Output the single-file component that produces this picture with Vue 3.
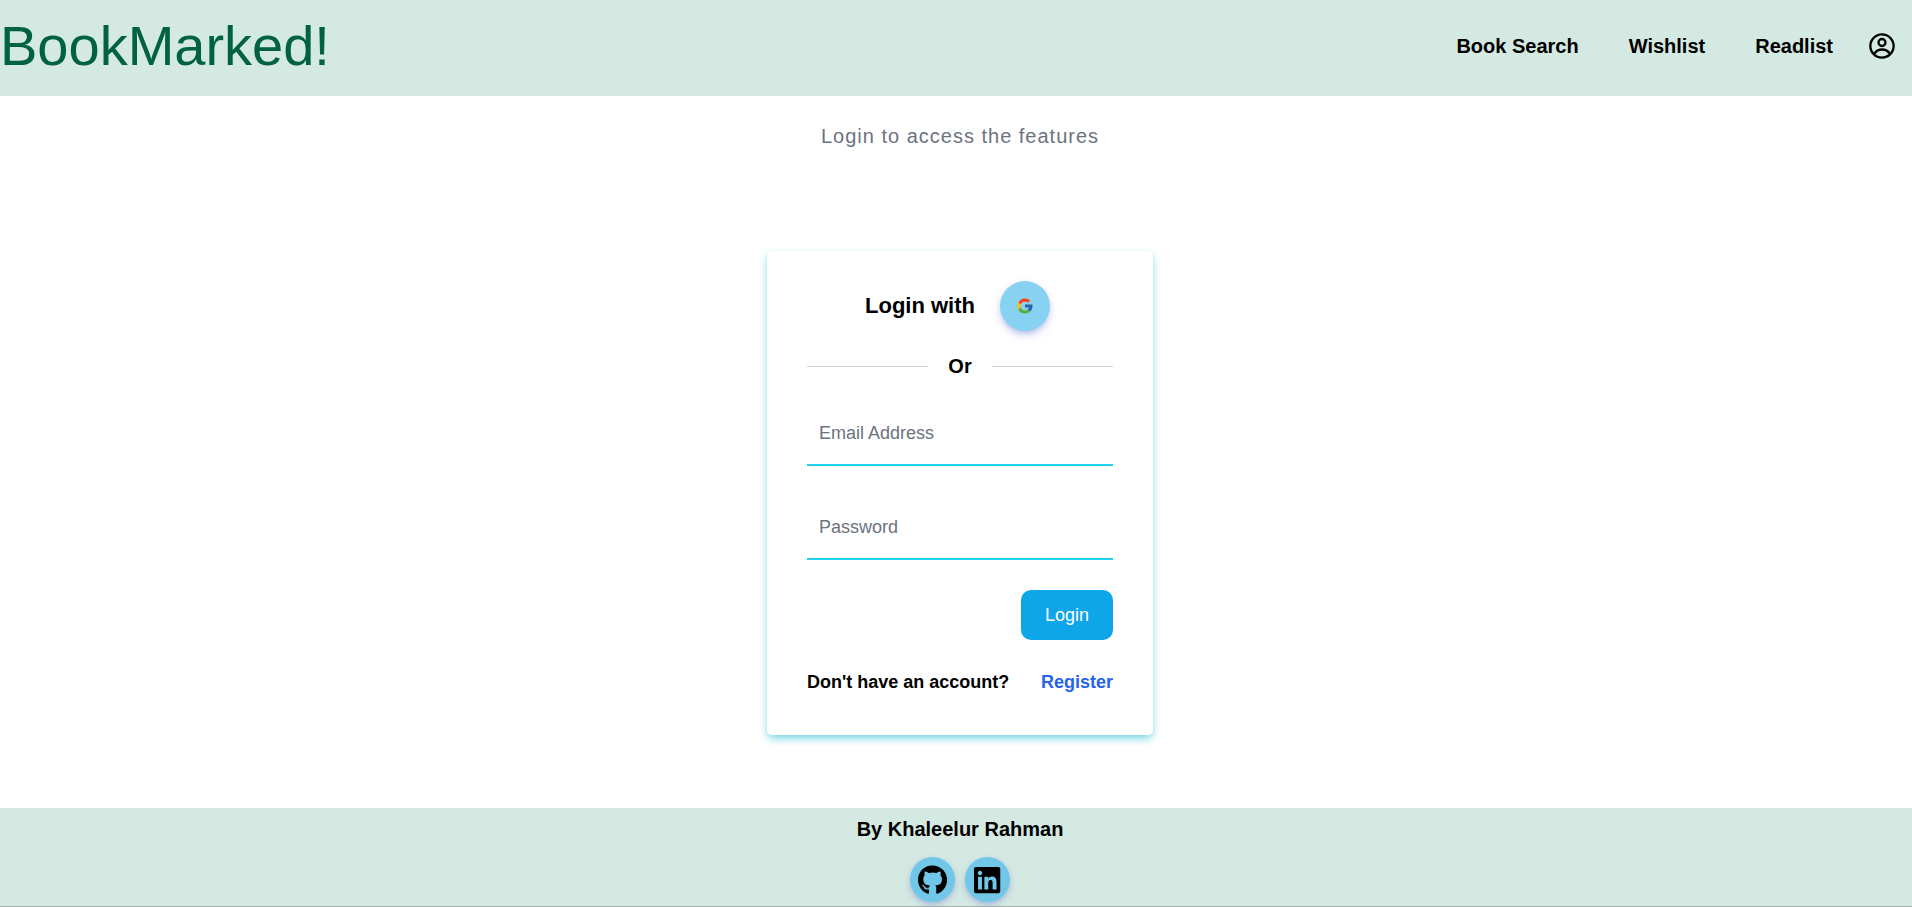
<script setup>
import { ref } from 'vue'

const navLinks = ['Book Search', 'Wishlist', 'Readlist']
const email = ref('')
const password = ref('')
</script>

<template>
  <div class="page">
    <header class="header">
      <h1 class="brand">BookMarked!</h1>
      <nav class="nav">
        <a v-for="link in navLinks" :key="link" href="#" class="nav-link">{{ link }}</a>
        <a href="#" class="profile" aria-label="Profile">
          <svg viewBox="0 0 24 24" width="28" height="28" fill="currentColor" aria-hidden="true">
            <path fill-rule="evenodd" clip-rule="evenodd" d="M16 9a4 4 0 1 1-8 0 4 4 0 0 1 8 0Zm-2 0a2 2 0 1 1-4 0 2 2 0 0 1 4 0Z" />
            <path fill-rule="evenodd" clip-rule="evenodd" d="M12 1C5.925 1 1 5.925 1 12s4.925 11 11 11 11-4.925 11-11S18.075 1 12 1ZM3 12c0 2.09.713 4.014 1.908 5.542A8.986 8.986 0 0 1 12.065 14a8.984 8.984 0 0 1 7.092 3.458A9 9 0 1 0 3 12Zm9 9a8.963 8.963 0 0 1-5.672-2.012A6.992 6.992 0 0 1 12.065 16a6.991 6.991 0 0 1 5.689 2.92A8.964 8.964 0 0 1 12 21Z" />
          </svg>
        </a>
      </nav>
    </header>

    <main class="main">
      <p class="intro">Login to access the features</p>

      <form class="card" @submit.prevent>
        <div class="social">
          <span class="social-text">Login with</span>
          <button type="button" class="google" aria-label="Login with Google">
            <svg viewBox="0 0 48 48" width="18" height="18" aria-hidden="true">
              <path fill="#FFC107" d="M43.611 20.083H42V20H24v8h11.303c-1.649 4.657-6.08 8-11.303 8-6.627 0-12-5.373-12-12s5.373-12 12-12c3.059 0 5.842 1.154 7.961 3.039l5.657-5.657C34.046 6.053 29.268 4 24 4 12.955 4 4 12.955 4 24s8.955 20 20 20 20-8.955 20-20c0-1.341-.138-2.65-.389-3.917z" />
              <path fill="#F4402C" d="M6.306 14.691l6.571 4.819C14.655 15.108 18.961 12 24 12c3.059 0 5.842 1.154 7.961 3.039l5.657-5.657C34.046 6.053 29.268 4 24 4 16.318 4 9.656 8.337 6.306 14.691z" />
              <path fill="#4CAF50" d="M24 44c5.166 0 9.86-1.977 13.409-5.192l-6.19-5.238A11.91 11.91 0 0 1 24 36c-5.202 0-9.619-3.317-11.283-7.946l-6.522 5.025C9.505 39.556 16.227 44 24 44z" />
              <path fill="#1565C0" d="M43.611 20.083H42V20H24v8h11.303a12.04 12.04 0 0 1-4.087 5.571l.003-.002 6.19 5.238C36.971 39.205 44 34 44 24c0-1.341-.138-2.65-.389-3.917z" />
            </svg>
          </button>
        </div>

        <div class="divider"><span>Or</span></div>

        <div class="fields">
          <input v-model="email" class="field" type="email" aria-label="Email Address" placeholder="Email Address" />
          <input v-model="password" class="field" type="password" aria-label="Password" placeholder="Password" />
          <button type="submit" class="submit">Login</button>
        </div>

        <p class="signup">
          <span>Don't have an account?</span>
          <a href="#" class="register">Register</a>
        </p>
      </form>
    </main>

    <footer class="footer">
      <p class="author">By Khaleelur Rahman</p>
      <div class="contacts">
        <a href="#" class="contact" aria-label="GitHub">
          <svg viewBox="0 0 496 512" height="30" fill="currentColor" aria-hidden="true">
            <path d="M165.9 397.4c0 2-2.3 3.6-5.2 3.6-3.3.3-5.6-1.3-5.6-3.6 0-2 2.3-3.6 5.2-3.6 3-.3 5.6 1.3 5.6 3.6zm-31.1-4.5c-.7 2 1.3 4.3 4.3 4.9 2.6 1 5.6 0 6.2-2s-1.3-4.3-4.3-5.2c-2.6-.7-5.5.3-6.2 2.3zm44.2-1.7c-2.9.7-4.9 2.6-4.6 4.9.3 2 2.9 3.3 5.9 2.6 2.9-.7 4.9-2.6 4.6-4.6-.3-1.9-3-3.2-5.9-2.9zM244.8 8C106.1 8 0 113.3 0 252c0 110.9 69.8 205.8 169.5 239.2 12.8 2.3 17.3-5.6 17.3-12.1 0-6.2-.3-40.4-.3-61.4 0 0-70 15-84.7-29.8 0 0-11.4-29.1-27.8-36.6 0 0-22.9-15.7 1.6-15.4 0 0 24.9 2 38.6 25.8 21.9 38.6 58.6 27.5 72.9 20.9 2.3-16 8.8-27.1 16-33.7-55.9-6.2-112.3-14.3-112.3-110.5 0-27.5 7.6-41.3 23.6-58.9-2.6-6.5-11.1-33.3 2.6-67.9 20.9-6.5 69 27 69 27 20-5.6 41.5-8.5 62.8-8.5s42.8 2.9 62.8 8.5c0 0 48.1-33.6 69-27 13.7 34.7 5.2 61.4 2.6 67.9 16 17.7 25.8 31.5 25.8 58.9 0 96.5-58.9 104.2-114.8 110.5 9.2 7.9 17 22.9 17 46.4 0 33.7-.3 75.4-.3 83.6 0 6.5 4.6 14.4 17.3 12.1C428.2 457.8 496 362.9 496 252 496 113.3 383.5 8 244.8 8z" />
          </svg>
        </a>
        <a href="#" class="contact" aria-label="LinkedIn">
          <svg viewBox="0 0 448 512" height="30" fill="currentColor" aria-hidden="true">
            <path d="M416 32H31.9C14.3 32 0 46.5 0 64.3v383.4C0 465.5 14.3 480 31.9 480H416c17.6 0 32-14.5 32-32.3V64.3c0-17.8-14.4-32.3-32-32.3zM135.4 416H69V202.2h66.5V416zm-33.2-243c-21.3 0-38.5-17.3-38.5-38.5S80.9 96 102.2 96c21.2 0 38.5 17.3 38.5 38.5 0 21.3-17.2 38.5-38.5 38.5zm282.1 243h-66.4V312c0-24.8-.5-56.7-34.5-56.7-34.6 0-39.9 27-39.9 54.9V416h-66.4V202.2h63.7v29.2h.9c8.9-16.8 30.6-34.5 62.9-34.5 67.2 0 79.7 44.3 79.7 101.9V416z" />
          </svg>
        </a>
      </div>
    </footer>
  </div>
</template>

<style>
body {
  margin: 0;
  background: #fff;
}
</style>

<style scoped>
.page,
.page * {
  box-sizing: border-box;
}

.page {
  display: flex;
  flex-direction: column;
  min-height: 100vh;
  font-family: "Liberation Sans", Arial, sans-serif;
  font-size: 20px;
  line-height: 30px;
  color: #000;
}

p,
h1 {
  margin: 0;
}

a {
  color: inherit;
  text-decoration: none;
}

svg {
  display: block;
}

button {
  border: 0;
  font-family: inherit;
  cursor: pointer;
}

.header {
  display: flex;
  align-items: center;
  justify-content: space-between;
  min-height: 96px;
  padding: 0 16px 4px 0;
  background: #d4e9e2;
}

.brand {
  color: #006241;
  font-size: 56px;
  font-weight: 400;
  line-height: 56px;
}

.nav {
  display: flex;
  align-items: center;
  gap: 50px;
  font-weight: 700;
}

.profile {
  margin-left: -15px;
}

.main {
  display: flex;
  flex: 1;
  flex-direction: column;
  align-items: center;
  padding: 25px 0 73px 8px;
}

.intro {
  margin-bottom: 100px;
  color: #6b7280;
  letter-spacing: 1px;
}

.card {
  width: 386px;
  max-width: 100%;
  padding: 30px 40px 40px;
  border-radius: 5px;
  background: #fff;
  box-shadow: 0 4px 8px -1px rgba(6, 182, 212, 0.6);
}

.social {
  display: flex;
  align-items: center;
  justify-content: center;
  gap: 25px;
  margin-bottom: 20px;
  padding-right: 5px;
}

.social-text {
  font-size: 22px;
  font-weight: 700;
}

.google {
  display: flex;
  align-items: center;
  justify-content: center;
  width: 50px;
  height: 50px;
  padding: 0;
  border-radius: 50%;
  background: #87d1f3;
  box-shadow: 0 4px 9px -2px rgba(59, 80, 200, 0.5);
}

.divider {
  display: flex;
  align-items: center;
  gap: 20px;
  margin-bottom: 20px;
  font-weight: 700;
  line-height: 31px;
}

.divider::before,
.divider::after {
  flex: 1;
  height: 1px;
  background: #cdd1d1;
  content: "";
}

.fields {
  display: flex;
  flex-direction: column;
  gap: 30px;
}

.field {
  width: 100%;
  height: 64px;
  padding: 0 12px;
  border: 0;
  border-bottom: 2px solid #22d3ee;
  outline: 0;
  background: transparent;
  font-family: inherit;
  font-size: 18px;
}

.field::placeholder {
  color: #6b7280;
  opacity: 1;
}

.submit {
  align-self: flex-end;
  height: 50px;
  padding: 0 24px;
  border-radius: 10px;
  background: #0ea5e9;
  color: #fff;
  font-size: 18px;
}

.signup {
  display: flex;
  justify-content: space-between;
  margin-top: 30px;
  font-size: 18px;
  font-weight: 700;
  line-height: 25px;
}

.register {
  color: #2563eb;
}

.footer {
  display: flex;
  flex-direction: column;
  align-items: center;
  gap: 13px;
  padding: 6px 0 4px 8px;
  border-bottom: 1px solid #a9b1af;
  background: #d4e9e2;
}

.author {
  font-weight: 700;
}

.contacts {
  display: flex;
  gap: 10px;
}

.contact {
  display: flex;
  align-items: center;
  justify-content: center;
  width: 45px;
  height: 45px;
  border-radius: 50%;
  background: #71c7e8;
  box-shadow: 0 3px 7px -1px rgba(59, 80, 200, 0.4);
}
</style>
